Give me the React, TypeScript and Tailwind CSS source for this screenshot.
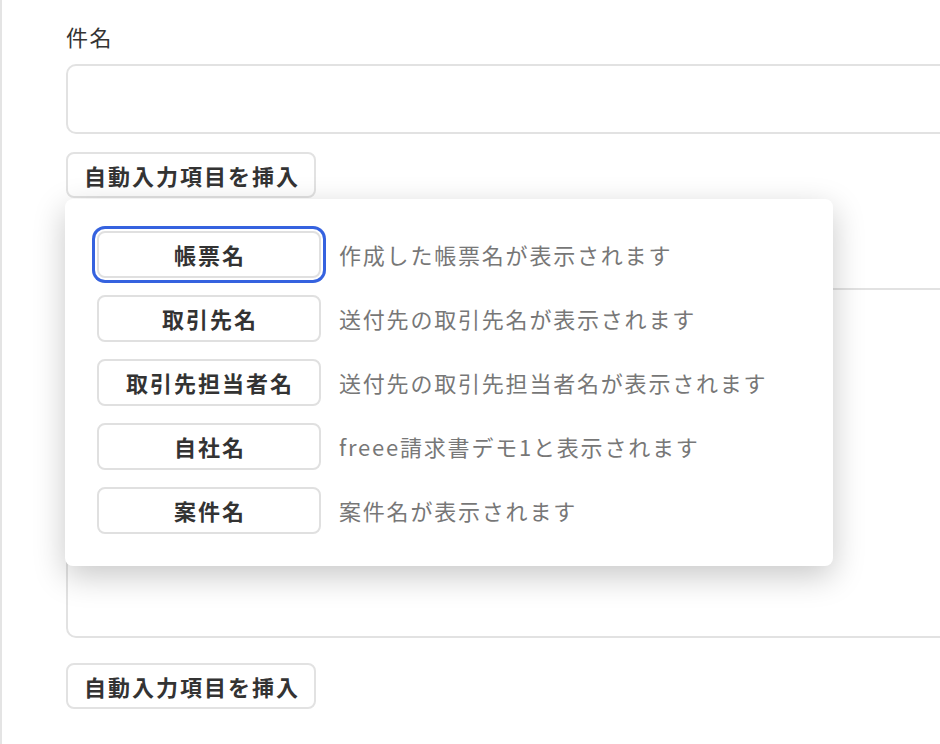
import React from "react";

const items = [
  { name: "帳票名", desc: "作成した帳票名が表示されます", focus: true },
  { name: "取引先名", desc: "送付先の取引先名が表示されます" },
  { name: "取引先担当者名", desc: "送付先の取引先担当者名が表示されます" },
  { name: "自社名", desc: "freee請求書デモ1と表示されます" },
  { name: "案件名", desc: "案件名が表示されます" },
];

const font = { fontFamily: '"Noto Sans CJK JP", "Noto Sans", sans-serif' };

export default function App() {
  return (
    <div
      className="relative h-[744px] w-[940px] overflow-hidden bg-white border-l-2 border-[#e4e4e4] pl-[64px] pt-[20px]"
      style={font}
    >
      <div className="h-[32px] text-[22px] leading-[32px] tracking-[1.5px] text-[#333]">件名</div>
      <div className="mt-[12px] h-[70px] w-[960px] rounded-[10px] border-2 border-[#e2e2e2] bg-white" />
      <button className="mt-[18px] flex h-[46px] w-[250px] items-center justify-center rounded-[8px] border-2 border-[#e2e2e2] bg-white pl-[2px] text-[22px] font-bold tracking-[2px] text-[#333]">
        自動入力項目を挿入
      </button>
      <div className="mt-[26px] h-[32px] text-[22px] leading-[32px] text-[#333]">メッセージ</div>
      <div className="mt-[32px] h-[350px] w-[960px] rounded-[10px] border-2 border-[#e2e2e2] bg-white" />
      <button className="mt-[25px] flex h-[46px] w-[250px] items-center justify-center rounded-[8px] border-2 border-[#e2e2e2] bg-white pl-[2px] text-[22px] font-bold tracking-[2px] text-[#333]">
        自動入力項目を挿入
      </button>

      <div className="absolute left-[63px] top-[199px] flex h-[367px] w-[768px] flex-col gap-[17px] rounded-[8px] bg-white pl-[32px] pt-[32px] shadow-[0_10px_32px_rgba(0,0,0,0.22)]">
        {items.map((it) => (
          <div key={it.name} className="flex items-center gap-[18px]">
            <button
              className={
                "flex h-[47px] w-[224px] items-center justify-center rounded-[8px] border-2 border-[#e0e0e0] bg-white pl-[2px] text-[22px] font-bold tracking-[2px] text-[#333] " +
                (it.focus ? "ring-[3px] ring-[#3562df] ring-offset-[2px]" : "")
              }
            >
              {it.name}
            </button>
            <span className="text-[22px] tracking-[1.8px] text-[#777]">{it.desc}</span>
          </div>
        ))}
      </div>
    </div>
  );
}
